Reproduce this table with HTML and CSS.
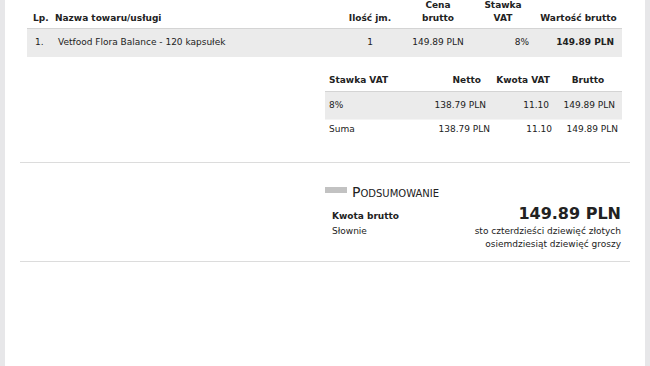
FILE: index.html
```html
<!DOCTYPE html>
<html lang="pl">
<head>
<meta charset="utf-8">
<link rel="stylesheet" href="styles.css">
</head>
<body>
<div class="page">
  <table class="items">
    <colgroup>
      <col class="c-lp"><col class="c-name"><col class="c-qty"><col class="c-price"><col class="c-vat"><col class="c-total">
    </colgroup>
    <thead>
      <tr>
        <th class="left">Lp.</th>
        <th class="left">Nazwa towaru/usługi</th>
        <th>Ilość jm.</th>
        <th>Cena<br>brutto</th>
        <th>Stawka<br>VAT</th>
        <th>Wartość brutto</th>
      </tr>
    </thead>
    <tbody>
      <tr>
        <td class="lp">1.</td>
        <td>Vetfood Flora Balance - 120 kapsułek</td>
        <td class="center">1</td>
        <td class="center">149.89 PLN</td>
        <td class="right vatcell">8%</td>
        <td class="right strong">149.89 PLN</td>
      </tr>
    </tbody>
  </table>

  <table class="vat">
    <colgroup>
      <col class="v1"><col class="v2"><col class="v3"><col class="v4">
    </colgroup>
    <thead>
      <tr>
        <th class="left h1">Stawka VAT</th>
        <th class="h2">Netto</th>
        <th class="h3">Kwota VAT</th>
        <th class="h4">Brutto</th>
      </tr>
    </thead>
    <tbody>
      <tr class="shaded">
        <td class="d1">8%</td>
        <td class="d2">138.79 PLN</td>
        <td class="d3">11.10</td>
        <td class="d4">149.89 PLN</td>
      </tr>
      <tr class="sum">
        <td class="d1">Suma</td>
        <td class="d2">138.79 PLN</td>
        <td class="d3">11.10</td>
        <td class="d4">149.89 PLN</td>
      </tr>
    </tbody>
  </table>

  <hr class="rule">

  <section class="summary">
    <h2 class="summary-title"><span class="bar"></span>Podsumowanie</h2>
    <div class="summary-row">
      <span class="label strong">Kwota brutto</span>
      <span class="amount">149.89 PLN</span>
    </div>
    <div class="summary-row words">
      <span class="label">Słownie</span>
      <span class="in-words">sto czterdzieści dziewięć złotych<br>osiemdziesiąt dziewięć groszy</span>
    </div>
  </section>

  <hr class="rule">
</div>
</body>
</html>
```

FILE: styles.css
```css
* { box-sizing: border-box; }
html, body { margin: 0; padding: 0; }
body {
  background: #e7e7e9;
  font-family: "DejaVu Sans", Verdana, sans-serif;
  font-size: 9px;
  color: #222;
  overflow: hidden;
}
.page {
  margin: 0 5px;
  background: #fff;
  min-height: 366px;
  padding: 0 15px;
  overflow: hidden;
}
table {
  border-collapse: collapse;
  table-layout: fixed;
}
th {
  font-weight: bold;
  color: #222;
  line-height: 13px;
  vertical-align: bottom;
  text-align: center;
  padding: 0 4px 4px;
  border-bottom: 1px solid #d4d4d4;
}
td {
  line-height: 13px;
  padding: 7px 6px;
  vertical-align: middle;
}
.left { text-align: left; }
.center { text-align: center; }
.right { text-align: right; }
.strong { font-weight: bold; }

.items {
  width: 595px;
  margin: -1px 8px 0 7px;
}
.items .c-lp { width: 23px; }
.items .c-name { width: 285px; }
.items .c-qty { width: 70px; }
.items .c-price { width: 66px; }
.items .c-vat { width: 64px; }
.items .c-total { width: 87px; }
.items th { padding-bottom: 3px; }
.items th:first-child { padding-left: 6px; }
.items th:nth-child(2) { padding-left: 5px; }
.items th:last-child { padding-left: 2px; padding-right: 2px; }
.items tbody tr { background: #ebebeb; }
.items td { height: 28px; }
.items td.lp { padding-left: 8px; }
.items td:nth-child(2) { padding-left: 8px; }
.items td.strong { padding-right: 8px; }

.vat {
  width: 297px;
  margin: 12px 8px 0 auto;
}
.vat .v1 { width: 100px; }
.vat .v2 { width: 67px; }
.vat .v3 { width: 62px; }
.vat .v4 { width: 68px; }
.vat th { padding-top: 5px; padding-bottom: 4px; }
.vat .h1 { padding-left: 4px; }
.vat .h2 { text-align: right; padding-right: 11px; }
.vat .h3 { text-align: right; padding-right: 4px; }
.vat .h4 { text-align: center; }
.vat td { height: 27px; text-align: right; }
.vat .d1 { text-align: left; padding-left: 4px; }
.vat .d2 { padding-right: 6px; }
.vat .d3 { padding-right: 5px; }
.vat .d4 { padding-right: 7px; }
.vat .shaded { background: #ebebeb; }
.vat .sum td { height: 22px; padding-top: 3px; padding-bottom: 5px; border-top: 1px solid #f4f4f4; }
.vat .sum .d2 { padding-right: 2px; }
.vat .sum .d3 { padding-right: 2px; }
.vat .sum .d4 { padding-right: 4px; }

.rule {
  border: 0;
  border-top: 1px solid #dcdcdc;
  margin: 21px 0 0;
  height: 0;
}

.summary {
  width: 297px;
  margin: 21px 8px 0 auto;
}
.summary-title {
  margin: 0 0 5px;
  font-weight: normal;
  font-size: 14px;
  font-variant: small-caps;
  line-height: 16px;
  display: flex;
  align-items: center;
  color: #222;
}
.bar {
  display: inline-block;
  width: 22px;
  height: 6px;
  background: #c2c2c2;
  margin-right: 5px;
  position: relative;
  top: -2px;
}
.summary-row {
  display: flex;
  justify-content: space-between;
  align-items: baseline;
  padding: 0 1px 0 7px;
}
.amount {
  font-size: 16px;
  font-weight: bold;
  line-height: 18px;
}
.words { margin-top: 2px; }
.words .label, .in-words { line-height: 13px; }
.in-words { text-align: right; }
.summary + .rule { margin-top: 10px; }
```
